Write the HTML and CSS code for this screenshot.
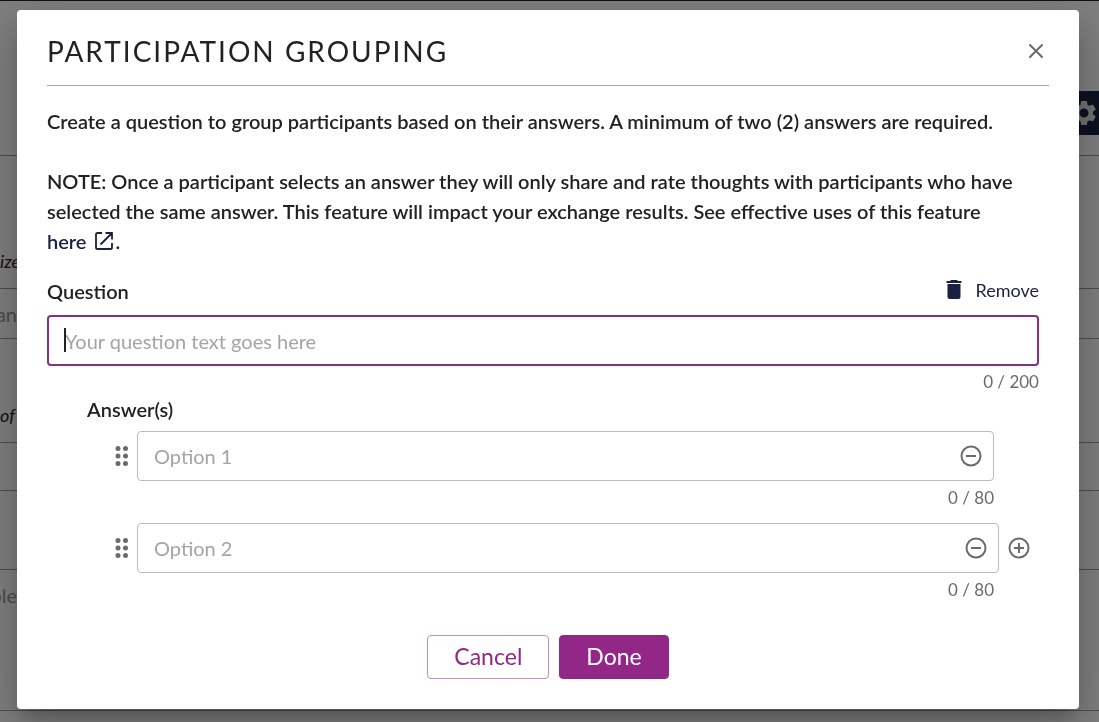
FILE: index.html
```html
<!DOCTYPE html>
<html lang="en">

<head>
  <meta charset="utf-8">
  <title>Participation Grouping</title>
  <link rel="stylesheet" href="styles.css">
</head>

<body>
  <div id="page" aria-hidden="true">
    <div class="pageRow rowTop">
      <div class="settingsTab">
        <svg width="30" height="30" viewBox="0 0 24 24"><path fill="#e4e4e4" d="M19.14 12.94c.04-.3.06-.61.06-.94 0-.32-.02-.64-.07-.94l2.03-1.58c.18-.14.23-.41.12-.61l-1.92-3.32c-.12-.22-.37-.29-.59-.22l-2.39.96c-.5-.38-1.03-.7-1.62-.94l-.36-2.54c-.04-.24-.24-.41-.48-.41h-3.84c-.24 0-.43.17-.47.41l-.36 2.54c-.59.24-1.13.57-1.62.94l-2.39-.96c-.22-.08-.47 0-.59.22L2.74 8.87c-.12.21-.08.47.12.61l2.03 1.58c-.05.3-.09.63-.09.94s.02.64.07.94l-2.03 1.58c-.18.14-.23.41-.12.61l1.92 3.32c.12.22.37.29.59.22l2.39-.96c.5.38 1.03.7 1.62.94l.36 2.54c.05.24.24.41.48.41h3.84c.24 0 .44-.17.47-.41l.36-2.54c.59-.24 1.13-.56 1.62-.94l2.39.96c.22.08.47 0 .59-.22l1.92-3.32c.12-.22.07-.47-.12-.61l-2.01-1.58zM12 15.6c-1.98 0-3.6-1.62-3.6-3.6s1.62-3.6 3.6-3.6 3.6 1.62 3.6 3.6-1.62 3.6-3.6 3.6z"/></svg>
      </div>
    </div>
    <div class="pageRow rowHint"><i>ize</i></div>
    <div class="pageRow rowField"><span>an</span></div>
    <div class="pageRow rowHint rowOf"><i>of</i></div>
    <div class="pageRow rowSmall"></div>
    <div class="pageRow rowGap"></div>
    <div class="pageRow rowExample"><span>ble</span></div>
  </div>

  <div id="backdrop">
    <div id="dialog" role="dialog" aria-labelledby="dialogTitle">
      <div class="dialogHeader">
        <h1 id="dialogTitle">PARTICIPATION GROUPING</h1>
        <button type="button" class="iconBtn" aria-label="Close">
          <svg width="26" height="26" viewBox="0 0 26 26"><path d="M7 7l12 12M19 7L7 19" fill="none" stroke="#6b6b6b" stroke-width="2" stroke-linecap="round"/></svg>
        </button>
      </div>

      <p>Create a question to group participants based on their answers. A minimum of two (2) answers are required.</p>
      <p>NOTE: Once a participant selects an answer they will only share and rate thoughts with participants who have selected the same answer. This feature will impact your exchange results. See effective uses of this feature <span class="linkWrap"><a href="#" class="hereLink">here <svg class="linkIcon" width="18" height="18" viewBox="0 0 18 18"><path d="M7 1H2.600Q1 1 1 2.600V15.400Q1 17 2.600 17H15.400Q17 17 17 15.400V11M10.500 1H17V7.500M17 1L5.500 12.500" fill="none" stroke="#1a2040" stroke-width="1.8"/></svg></a>.</span></p>

      <form id="questionForm">
        <div class="questionHead">
          <label for="question">Question</label>
          <button type="button" class="removeBtn">
            <svg width="16" height="20" viewBox="0 0 16 20"><path fill="#1a2040" d="M5 0h6l1 1h3.500v2H.5V1H4zM1.500 4h13v13q0 2-2 2h-9q-2 0-2-2z"/></svg>
            Remove
          </button>
        </div>
        <div class="questionField">
          <input id="question" type="text" placeholder="Your question text goes here">
        </div>
        <div class="counter">0 / 200</div>

        <fieldset class="answers">
          <legend>Answer(s)</legend>
          <div class="answer">
            <svg class="dragHandle" width="14" height="20" viewBox="0 0 14 20"><g fill="#6b6b6b"><circle cx="3" cy="2.500" r="2.500"/><circle cx="10.500" cy="2.500" r="2.500"/><circle cx="3" cy="10" r="2.500"/><circle cx="10.500" cy="10" r="2.500"/><circle cx="3" cy="17.500" r="2.500"/><circle cx="10.500" cy="17.500" r="2.500"/></g></svg>
            <div class="answerField">
              <input type="text" aria-label="Option 1" placeholder="Option 1">
              <button type="button" class="iconBtn" aria-label="Remove option 1">
                <svg width="22" height="22" viewBox="0 0 22 22"><path d="M6 11h10M11 1.500a9.500 9.500 0 1 1 0 19a9.500 9.500 0 1 1 0-19z" fill="none" stroke="#6b6b6b" stroke-width="2"/></svg>
              </button>
            </div>
          </div>
          <div class="counter">0 / 80</div>
          <div class="answer lastAnswer">
            <svg class="dragHandle" width="14" height="20" viewBox="0 0 14 20"><g fill="#6b6b6b"><circle cx="3" cy="2.500" r="2.500"/><circle cx="10.500" cy="2.500" r="2.500"/><circle cx="3" cy="10" r="2.500"/><circle cx="10.500" cy="10" r="2.500"/><circle cx="3" cy="17.500" r="2.500"/><circle cx="10.500" cy="17.500" r="2.500"/></g></svg>
            <div class="answerField">
              <input type="text" aria-label="Option 2" placeholder="Option 2">
              <button type="button" class="iconBtn" aria-label="Remove option 2">
                <svg width="22" height="22" viewBox="0 0 22 22"><path d="M6 11h10M11 1.500a9.500 9.500 0 1 1 0 19a9.500 9.500 0 1 1 0-19z" fill="none" stroke="#6b6b6b" stroke-width="2"/></svg>
              </button>
            </div>
            <button type="button" class="iconBtn" aria-label="Add option">
              <svg width="22" height="22" viewBox="0 0 22 22"><path d="M6 11h10M11 6v10M11 1.500a9.500 9.500 0 1 1 0 19a9.500 9.500 0 1 1 0-19z" fill="none" stroke="#6b6b6b" stroke-width="2"/></svg>
            </button>
          </div>
          <div class="counter">0 / 80</div>
        </fieldset>

        <div class="dialogActions">
          <button type="button" class="btn cancelBtn">Cancel</button>
          <button type="submit" class="btn doneBtn">Done</button>
        </div>
      </form>
    </div>
  </div>
</body>

</html>
```
FILE: styles.css
```css
* {
  box-sizing: border-box;
}

body {
  margin: 0;
  color: #222222;
  font-family: Lato, sans-serif;
  font-size: 20px;
  line-height: 30px;
}

button,
input {
  font-family: inherit;
}

/* page behind the dialog */
#page {
  border-top: 1px solid #1a2040;
}

.pageRow {
  border-bottom: 1px solid #9a9a9a;
  overflow: hidden;
}

.pageRow i {
  font-size: 18px;
}

.pageRow span {
  display: flex;
  justify-content: flex-end;
  width: 17px;
  color: #999999;
}

.rowTop {
  height: 155px;
  padding-top: 90px;
}

.settingsTab {
  display: flex;
  align-items: center;
  justify-content: flex-end;
  width: 60px;
  height: 44px;
  margin-left: auto;
  background: #1a2040;
}

.rowHint {
  height: 133px;
  padding-top: 89px;
}

.rowField {
  height: 50px;
  padding-top: 10px;
}

.rowOf {
  height: 104px;
  padding-top: 60px;
}

.rowSmall {
  height: 48px;
}

.rowGap {
  height: 79px;
}

.rowExample {
  height: 141px;
  padding-top: 10px;
}

#backdrop {
  position: fixed;
  inset: 0;
  overflow: hidden;
  padding: 10px 20px 0 17px;
  background: rgba(0, 0, 0, 0.5);
}

#dialog {
  padding: 20px 30px 30px;
  border-radius: 4px;
  background: #ffffff;
  box-shadow: 0 11px 15px -7px rgba(0, 0, 0, 0.2), 0 24px 38px 3px rgba(0, 0, 0, 0.14), 0 9px 46px 8px rgba(0, 0, 0, 0.12);
}

.dialogHeader {
  display: flex;
  align-items: center;
  justify-content: space-between;
  height: 56px;
  margin-bottom: 20px;
  padding-bottom: 13px;
  border-bottom: 1px solid #aaaaaa;
}

h1 {
  margin: 0;
  font-size: 28px;
  font-weight: 400;
  letter-spacing: 2px;
}

p {
  margin: 0 0 30px;
  font-weight: 600;
}

p + p {
  margin-bottom: 20px;
}

.linkWrap {
  white-space: nowrap;
}

.hereLink {
  color: #1a2040;
  text-decoration: none;
}

.linkIcon {
  margin: 0 2px 0 4px;
  vertical-align: -1px;
}

.iconBtn {
  display: flex;
  padding: 0;
  border: 0;
  background: none;
  cursor: pointer;
}

#questionForm {
  padding-right: 10px;
}

.questionHead {
  display: flex;
  justify-content: space-between;
  margin-bottom: 9px;
}

.questionHead label,
.answers legend {
  font-weight: 600;
}

.removeBtn {
  display: flex;
  align-items: center;
  gap: 14px;
  height: 28px;
  padding: 0;
  border: 0;
  background: none;
  color: #1a2040;
  font-size: 18px;
  cursor: pointer;
}

.questionField {
  position: relative;
}

/* text cursor */
.questionField::before {
  content: "";
  position: absolute;
  top: 13px;
  left: 17px;
  width: 2px;
  height: 24px;
  background: #222222;
}

input {
  width: 100%;
  height: 50px;
  padding: 0 16px;
  border: 0;
  border-radius: 4px;
  background: none;
  color: #222222;
  font-size: 20px;
}

input::placeholder {
  color: #a4a4a4;
}

#question {
  display: block;
  height: 51px;
  border: 2px solid #85307d;
}

.counter {
  height: 42px;
  padding-top: 2px;
  color: #6b6b6b;
  font-size: 17px;
  text-align: right;
}

#questionForm > .counter {
  height: 28px;
  padding-top: 1px;
}

.answers {
  margin: 0;
  padding: 0 45px 0 68px;
  border: 0;
}

.answers legend {
  height: 37px;
  margin-left: -28px;
  padding: 0;
}

.answer {
  display: flex;
  align-items: center;
  gap: 8px;
}

.answerField {
  display: flex;
  align-items: center;
  flex: 1;
  height: 50px;
  padding-right: 11px;
  border: 1px solid #bbbbbb;
  border-radius: 4px;
}

.lastAnswer {
  margin-right: -36px;
}

.lastAnswer .answerField {
  margin-right: 1px;
}

.dialogActions {
  display: flex;
  justify-content: center;
  gap: 10px;
  margin-right: -10px;
  padding-top: 20px;
}

.btn {
  height: 44px;
  padding: 0 26px 2px;
  border: 1px solid #922788;
  border-radius: 4px;
  font-size: 23px;
  cursor: pointer;
}

.cancelBtn {
  border-color: #c08fbb;
  background: #ffffff;
  color: #922788;
}

.doneBtn {
  background: #922788;
  color: #ffffff;
}
```
